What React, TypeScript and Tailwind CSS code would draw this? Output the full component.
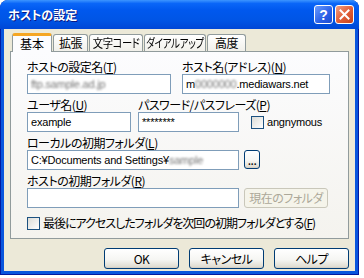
import React from 'react';

const ui = "font-['Noto_Sans_CJK_JP',sans-serif] [font-feature-settings:'palt'] text-[12px] tracking-[-0.5px]";
const latin = "font-['Liberation_Sans','Noto_Sans_CJK_JP',sans-serif] text-[11px] tracking-[-0.2px] text-black";

const Key = ({ k }: { k: string }) => (
  <span>
    (<span className="underline">{k}</span>)
  </span>
);

const Label = ({ children }: { children: React.ReactNode }) => (
  <div className={`${ui} text-black h-[14px] leading-[14px] whitespace-nowrap`}>{children}</div>
);

const Field = ({ w, children }: { w: string; children?: React.ReactNode }) => (
  <div className={`${w} ${latin} h-[20px] border border-[#7f9db9] bg-white px-[3px] leading-[18px] whitespace-nowrap overflow-hidden`}>
    {children}
  </div>
);

const Blur = ({ text }: { text: string }) => (
  <span className="inline-block blur-[1.2px] text-[#777]">{text}</span>
);

const Check = () => (
  <span className="inline-block w-[13px] h-[13px] border border-[#1c5180] bg-[linear-gradient(135deg,#dcdcd7,#ffffff)] shrink-0" />
);

const XpButton = ({ children, className = '', disabled = false }: { children: React.ReactNode; className?: string; disabled?: boolean }) => (
  <div
    className={`${ui} flex items-center justify-center rounded-[3px] border ${
      disabled
        ? 'border-[#c9c7ba] bg-[#f5f4ea] text-[#aca899]'
        : 'text-black border-[#003c74] bg-[linear-gradient(180deg,#ffffff_0%,#f6f6f3_55%,#dcd8cc_100%)] shadow-[inset_0_-1px_0_#d6d0c5]'
    } ${className}`}
  >
    {children}
  </div>
);

// 幅はスクリーンショットから
const tabs = [
  { label: '拡張', w: 'w-[35px]', fit: '' },
  { label: '文字コード', w: 'w-[54px]', fit: 'scale-x-[0.86]' },
  { label: 'ダイアルアップ', w: 'w-[62px]', fit: 'scale-x-[0.8]' },
  { label: '高度', w: 'w-[39px]', fit: '' },
];

export default function App() {
  return (
    <div className="w-[364px] h-[278px] bg-white">
      <div className="w-[359px] h-[275px] flex flex-col rounded-t-[8px] bg-[#0855dd] border border-[#0019a0] border-t-0">
        {/* TITLE BAR */}
        <div className="h-[29px] -mx-px flex items-center pl-[8px] pr-[5px] rounded-t-[8px] bg-[linear-gradient(180deg,#3d95ff_0%,#0a66f8_12%,#0058ee_35%,#0055e5_70%,#0047d6_100%)]">
          <span className={`${ui} tracking-normal font-bold text-white [text-shadow:1px_1px_0_#0a1883]`}>ホストの設定</span>
          <div className="ml-auto flex gap-[2px]">
            <div className="w-[19px] h-[19px] rounded-[3px] border border-white bg-[linear-gradient(135deg,#6a9cff,#2a5fe6_60%,#1d4bd0)] flex items-center justify-center">
              <span className="font-['Liberation_Sans',sans-serif] text-[14px] font-bold text-white leading-none">?</span>
            </div>
            <div className="w-[19px] h-[19px] rounded-[3px] border border-white bg-[linear-gradient(135deg,#f3a083,#e2603a_50%,#c7411a)] flex items-center justify-center">
              <svg width="11" height="11" viewBox="0 0 11 11">
                <path d="M1.5 1.5l8 8M9.5 1.5l-8 8" stroke="white" strokeWidth="2" strokeLinecap="square" />
              </svg>
            </div>
          </div>
        </div>

        {/* BODY */}
        <div className="flex-1 mx-[3px] mb-[3px] bg-[#ece9d8] px-[6px] pt-[4px] flex flex-col">
          {/* TABS */}
          <div className="h-[18px] flex items-end pl-[2px]">
            <div className={`${ui} text-black tracking-normal relative z-10 -mb-px h-[19px] w-[40px] flex items-center justify-center bg-[#fcfcfe] border-x border-[#919b9c] rounded-t-[3px] border-t-[3px] border-t-[#f5a623]`}>
              基本
            </div>
            {tabs.map((t) => (
              <div
                key={t.label}
                className={`${ui} ${t.w} text-black text-[12px] h-[17px] ml-[1px] flex items-center justify-center overflow-hidden whitespace-nowrap border border-b-0 border-[#919b9c] rounded-t-[3px] bg-[linear-gradient(180deg,#ffffff,#f1f0ea)]`}
              >
                <span className={`inline-block ${t.fit}`}>{t.label}</span>
              </div>
            ))}
          </div>

          {/* PANEL */}
          <div className="h-[188px] border border-[#919b9c] bg-[linear-gradient(180deg,#fcfcfe,#f4f3ee)] pl-[16px] pt-[8px] flex flex-col gap-[4px]">
            <div className="flex gap-[11px]">
              <div className="w-[144px]">
                <Label>ホストの設定名<Key k="T" /></Label>
                <Field w="w-[144px]"><Blur text="ftp.sample.ad.jp" /></Field>
              </div>
              <div className="w-[148px]">
                <Label>ホスト名(アドレス)<Key k="N" /></Label>
                <Field w="w-[148px]">m<Blur text="0000000" />.mediawars.net</Field>
              </div>
            </div>

            <div className="flex gap-[7px]">
              <div className="w-[104px]">
                <Label>ユーザ名<Key k="U" /></Label>
                <Field w="w-[104px]">example</Field>
              </div>
              <div className="w-[101px]">
                <Label>パスワード/パスフレーズ<Key k="P" /></Label>
                <Field w="w-[101px]">********</Field>
              </div>
              <div className="self-end h-[20px] ml-[5px] flex items-center gap-[3px]">
                <Check />
                <span className={latin}>angnymous</span>
              </div>
            </div>

            <div>
              <Label>ローカルの初期フォルダ<Key k="L" /></Label>
              <div className="flex gap-[5px]">
                <Field w="w-[212px]">C:¥Documents and Settings¥<Blur text="sample" /></Field>
                <XpButton className="w-[16px] h-[19px] leading-none">...</XpButton>
              </div>
            </div>

            <div>
              <Label>ホストの初期フォルダ<Key k="R" /></Label>
              <div className="flex gap-[5px]">
                <Field w="w-[212px]" />
                <XpButton disabled className="w-[84px] h-[20px]">現在のフォルダ</XpButton>
              </div>
            </div>

            <div className="mt-[2px] flex items-center gap-[3px]">
              <Check />
              <span className={`${ui} text-black tracking-[-1px]`}>最後にアクセスしたフォルダを次回の初期フォルダとする<Key k="F" /></span>
            </div>
          </div>

          {/* BUTTONS */}
          <div className="mt-[9px] flex justify-end gap-[10px]">
            <XpButton className="w-[75px] h-[21px]">OK</XpButton>
            <XpButton className="w-[75px] h-[21px]">キャンセル</XpButton>
            <XpButton className="w-[75px] h-[21px]">ヘルプ</XpButton>
          </div>
        </div>
      </div>
    </div>
  );
}
